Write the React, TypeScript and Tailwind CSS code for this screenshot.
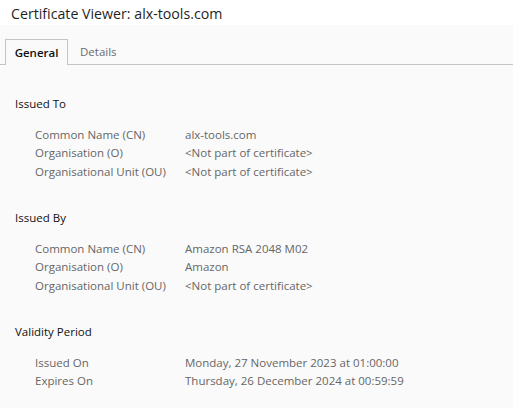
import React from "react";

type Row = [string, string];

const sections: { title: string; rows: Row[] }[] = [
  {
    title: "Issued To",
    rows: [
      ["Common Name (CN)", "alx-tools.com"],
      ["Organisation (O)", "<Not part of certificate>"],
      ["Organisational Unit (OU)", "<Not part of certificate>"],
    ],
  },
  {
    title: "Issued By",
    rows: [
      ["Common Name (CN)", "Amazon RSA 2048 M02"],
      ["Organisation (O)", "Amazon"],
      ["Organisational Unit (OU)", "<Not part of certificate>"],
    ],
  },
  {
    title: "Validity Period",
    rows: [
      ["Issued On", "Monday, 27 November 2023 at 01:00:00"],
      ["Expires On", "Thursday, 26 December 2024 at 00:59:59"],
    ],
  },
];

export default function App() {
  return (
    <div
      className="w-[513px] h-[408px] overflow-hidden bg-[#fafafa]"
      style={{ fontFamily: '"Open Sans", "Noto Sans", sans-serif' }}
    >
      <div className="h-[25px] bg-white pl-[11px] pt-[5px] text-[14.2px] text-[#1f1f1f] leading-[17px]">
        Certificate Viewer: alx-tools.com
      </div>
      <div className="pt-[14px] border-b border-[#c4c4c4] flex items-end text-[11.5px] leading-none">
        <div className="ml-[5px] w-[63px] h-[26px] -mb-px border border-b-0 border-[#c4c4c4] bg-[#fafafa] flex items-center justify-center font-semibold text-[#111]">
          General
        </div>
        <div className="ml-[12px] h-[25px] flex items-center text-[#6b6b6b]">Details</div>
      </div>
      <div className="pt-[29.5px] pl-[15px] text-[11.5px] leading-[18.5px]">
        {sections.map((s) => (
          <div key={s.title} className="mb-[27.5px]">
            <div className="text-[#111]">{s.title}</div>
            <div className="mt-[12.5px] pl-[20px]">
              {s.rows.map(([k, v]) => (
                <div key={k} className="flex">
                  <div className="w-[150px] text-[#666]">{k}</div>
                  <div className="text-[#666]">{v}</div>
                </div>
              ))}
            </div>
          </div>
        ))}
      </div>
    </div>
  );
}
